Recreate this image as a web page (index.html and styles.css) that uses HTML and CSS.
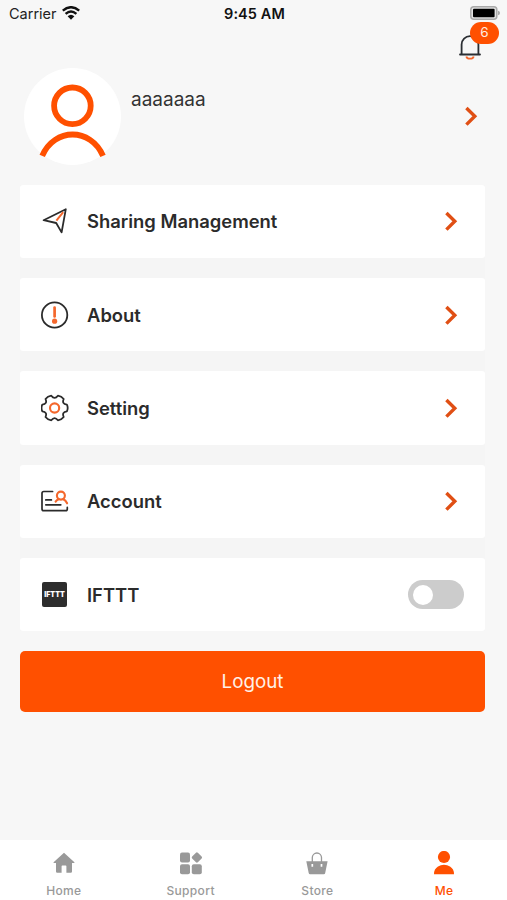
FILE: index.html
```html
<!DOCTYPE html>
<html lang="en">
<head>
<meta charset="UTF-8">
<meta name="viewport" content="width=device-width, initial-scale=1.0">
<title>Me</title>
<link rel="stylesheet" href="styles.css">
</head>
<body>
<!-- status bar -->
<div class="status-bar">
  <div class="carrier">
    <span>Carrier</span>
    <svg class="wifi" viewBox="0 0 18 14">
      <path d="M.8 4.6Q9-2.2 17.2 4.6M3.6 7.9Q9 3.2 14.4 7.9" fill="none" stroke="#111" stroke-width="2.4"/>
      <path d="M5.6 10.3Q9 7.3 12.4 10.3L9 13.8Z" fill="#111"/>
    </svg>
  </div>
  <div class="time">9:45 AM</div>
  <svg class="battery" viewBox="0 0 30 14">
    <rect x=".8" y=".8" width="26" height="12.4" rx="3" fill="#e4e4e4" stroke="#a9a9a9" stroke-width="1.5"/>
    <rect x="3" y="2.7" width="21.6" height="8.6" rx="1" fill="#000"/>
    <path d="M28 4.8Q30 5.3 30 7T28 9.2Z" fill="#a9a9a9"/>
  </svg>
</div>
<div class="message">
  <svg class="bell" viewBox="0 0 24 28">
    <path d="M2 21.5h20M3.6 21V11.5a8.4 8.4 0 0 1 16.8 0v9.5" fill="none" stroke="#2b2e33" stroke-width="1.8" stroke-linecap="round"/>
    <path d="M8.3 23.4q.6 2.3 3.7 2.3t3.7-2.3" fill="none" stroke="#f4672c" stroke-width="1.8"/>
  </svg>
  <span class="badge">6</span>
</div>
<!-- user info -->
<div class="profile">
  <svg class="avatar" viewBox="0 0 97 97">
    <circle cx="48.5" cy="48.5" r="48.5" fill="#fff"/>
    <g fill="none" stroke="#ff5000" stroke-width="5.8">
      <circle cx="48.4" cy="37.8" r="18.3"/>
      <path d="M18.2 87.8C30.5 59.4 66.7 59.4 79 87.8"/>
    </g>
  </svg>
  <div class="name">aaaaaaa</div>
  <svg class="arrow" viewBox="0 0 14 20"><path d="M2.4 2l8.4 8.3-8.4 8.3"/></svg>
</div>
<!-- menu list -->
<div class="menu">
  <div class="item">
    <svg class="icon" viewBox="0 0 28 28">
      <path d="M2.6 13.2L24.8 2.2 20.6 25.4 15.2 16Z" fill="none" stroke="#2b2b2b" stroke-width="1.8" stroke-linejoin="round"/>
      <path d="M22.2 5.2L15.4 13.6" stroke="#f4672c" stroke-width="2"/>
    </svg>
    <span class="label">Sharing Management</span>
    <svg class="arrow" viewBox="0 0 14 20"><path d="M2.4 2l8.4 8.3-8.4 8.3"/></svg>
  </div>
  <div class="item">
    <svg class="icon" viewBox="0 0 28 28">
      <circle cx="13.6" cy="14" r="12.7" fill="none" stroke="#2b2b2b" stroke-width="1.8"/>
      <path d="M13.6 6.6v8.8" stroke="#f4672c" stroke-width="2.7" stroke-linecap="round"/>
      <circle cx="13.6" cy="20.2" r="2.6" fill="#f4672c"/>
    </svg>
    <span class="label">About</span>
    <svg class="arrow" viewBox="0 0 14 20"><path d="M2.4 2l8.4 8.3-8.4 8.3"/></svg>
  </div>
  <div class="item">
    <svg class="icon" viewBox="-13.6 -14 28 28">
      <path d="M12.3-3.3Q13.9 0 12.3 3.3Q6.9 4 9.1 9Q7 11.8 3.3 12.3Q0 8-3.3 12.3Q-7 11.8-9.1 9Q-6.9 4-12.3 3.3Q-13.9 0-12.3-3.3Q-6.9-4-9.1-9Q-7-11.8-3.3-12.3Q0-8 3.3-12.3Q7-11.8 9.1-9Q6.9-4 12.3-3.3Z" fill="none" stroke="#2b2b2b" stroke-width="1.8" stroke-linejoin="round"/>
      <circle r="4.6" fill="none" stroke="#f4672c" stroke-width="2.1"/>
    </svg>
    <span class="label">Setting</span>
    <svg class="arrow" viewBox="0 0 14 20"><path d="M2.4 2l8.4 8.3-8.4 8.3"/></svg>
  </div>
  <div class="item">
    <svg class="icon" viewBox="0 0 28 28">
      <path d="M11.6 4.5H2.8Q1 4.5 1 6.2V22Q1 23.7 2.8 23.7H24.6Q26.3 23.7 26.3 22V20.4M4.8 12.9h5.6M4.8 17.8h15" fill="none" stroke="#2b2b2b" stroke-width="1.7" stroke-linecap="round"/>
      <g fill="none" stroke="#f4672c" stroke-width="2.1" stroke-linecap="round">
        <circle cx="19.9" cy="8.6" r="4"/>
        <path d="M14.6 14.6q1.2-1.8 3.2-2.3M22.2 12.3q2.4.8 3.9 4"/>
      </g>
    </svg>
    <span class="label">Account</span>
    <svg class="arrow" viewBox="0 0 14 20"><path d="M2.4 2l8.4 8.3-8.4 8.3"/></svg>
  </div>
  <div class="item">
    <div class="ifttt">IFTTT</div>
    <span class="label">IFTTT</span>
    <div class="switch"></div>
  </div>
</div>
<button class="logout">Logout</button>
<!-- bottom tabs -->
<div class="tabs">
  <div class="tab">
    <svg viewBox="0 0 24 24">
      <path d="M12 1.8L1.6 11.2Q1.1 12 2 12H4V20.6Q4 21.8 5.2 21.8H9.6V15.2Q9.6 14.5 10.3 14.5H13.7Q14.4 14.5 14.4 15.2V21.8H18.8Q20 21.8 20 20.6V12H22Q22.9 12 22.4 11.2Z"/>
    </svg>
    <span>Home</span>
  </div>
  <div class="tab">
    <svg viewBox="0 0 24 24">
      <rect x="1" y="1.6" width="10" height="10" rx="2"/>
      <rect x="1" y="13.2" width="10" height="10" rx="2"/>
      <rect x="12.8" y="13.2" width="10" height="10" rx="2"/>
      <rect x="13.9" y="2.5" width="8" height="8" rx="1.3" transform="rotate(45 17.9 6.5)"/>
    </svg>
    <span>Support</span>
  </div>
  <div class="tab">
    <svg viewBox="0 0 24 24">
      <path d="M7.3 11V6.6a4.6 4.6 0 0 1 9.2 0V11" fill="none" stroke="#999" stroke-width="1.3"/>
      <path d="M1.3 10.3H22.6L20.2 22Q20 23.2 18.8 23.2H5.1Q3.9 23.2 3.7 22Z"/>
      <path d="M7.3 13v2.8M16.5 13v2.8" stroke="#fff" stroke-width="1.7"/>
    </svg>
    <span>Store</span>
  </div>
  <div class="tab active">
    <svg viewBox="0 0 24 24">
      <circle cx="12" cy="6" r="6.1"/>
      <path d="M2 23.2Q2 18 6 15.6Q8.6 13.8 12 13.8T18 15.6Q22 18 22 23.2Z"/>
    </svg>
    <span>Me</span>
  </div>
</div>
</body>
</html>
```
FILE: styles.css
```css
* {
  box-sizing: border-box;
}
body {
  margin: 0;
  height: 900px;
  display: flex;
  flex-direction: column;
  background: #f7f7f7;
  font-family: Inter, "Liberation Sans", sans-serif;
  color: #2b2b2b;
  overflow: hidden;
}
svg {
  display: block;
  flex-shrink: 0;
}
/* status bar */
.status-bar {
  display: grid;
  grid-template-columns: 1fr auto 1fr;
  align-items: center;
  height: 27px;
  padding: 0 7px 0 9px;
  font-size: 14.5px;
  color: #222;
}
.carrier {
  display: flex;
  align-items: center;
  gap: 6px;
}
.wifi {
  width: 18px;
  height: 14px;
  margin: -2px 0 0 -1px;
}
.time {
  font-weight: 600;
  letter-spacing: 0.1px;
  color: #111;
}
.battery {
  width: 30px;
  height: 14px;
  margin-top: -1px;
  justify-self: end;
}
/* message bell */
.message {
  position: relative;
  align-self: flex-end;
  width: 24px;
  height: 28px;
  margin: 6px 25px 0 0;
}
.bell {
  width: 24px;
  height: 28px;
}
.badge {
  position: absolute;
  left: 12px;
  top: -11px;
  width: 29px;
  height: 22px;
  border-radius: 11px;
  background: #ff5000;
  color: #ffede2;
  font-size: 13.5px;
  line-height: 21px;
  text-align: center;
}
/* user info */
.profile {
  display: flex;
  align-items: center;
  height: 97px;
  margin: 6.5px 29.5px 0 24px;
}
.avatar {
  width: 97px;
  height: 97px;
}
.name {
  flex: 1;
  align-self: flex-start;
  margin: 19px 0 0 10px;
  font-size: 19px;
  line-height: 26px;
  color: #333;
}
.arrow {
  width: 14px;
  height: 20px;
  fill: none;
  stroke: #e04f14;
  stroke-width: 3.4;
}
/* menu list */
.menu {
  display: flex;
  flex-direction: column;
  gap: 20px;
  margin: 20px 22px 0 20px;
  background: #f5f5f5;
}
.item {
  display: flex;
  align-items: center;
  height: 73.4px;
  padding: 0 27px 0 21px;
  background: #fff;
  border-radius: 3px;
}
.icon {
  width: 28px;
  height: 28px;
}
.label {
  flex: 1;
  margin-left: 18px;
  font-size: 18.4px;
  font-weight: 600;
}
.ifttt {
  width: 25px;
  height: 25px;
  margin: 0 2px 0 1px;
  border-radius: 2px;
  background: #2d2d2d;
  color: #fff;
  font-size: 7px;
  font-weight: 900;
  line-height: 25px;
  text-align: center;
}
.switch {
  width: 56px;
  height: 29px;
  margin-right: -6px;
  padding: 4.5px;
  border-radius: 15px;
  background: #ccc;
}
.switch::before {
  content: "";
  display: block;
  width: 20px;
  height: 20px;
  border-radius: 50%;
  background: #fff;
}
.logout {
  height: 61px;
  margin: 20px 22px 0 20px;
  border: none;
  border-radius: 5px;
  background: #ff5000;
  color: #fff1e8;
  font-family: inherit;
  font-size: 18.8px;
}
/* bottom tabs */
.tabs {
  display: grid;
  grid-template-columns: repeat(4, 1fr);
  height: 60px;
  margin-top: auto;
  background: #fff;
}
.tab {
  display: flex;
  flex-direction: column;
  align-items: center;
  padding: 11px 0 0 1px;
  font-size: 12px;
  font-weight: 500;
  letter-spacing: 0.35px;
  line-height: 16px;
  color: #999;
}
.tab svg {
  width: 24px;
  height: 24px;
  margin-bottom: 8px;
  fill: #999;
}
.tab.active {
  color: #ff5000;
}
.tab.active svg {
  fill: #ff5000;
}
```
